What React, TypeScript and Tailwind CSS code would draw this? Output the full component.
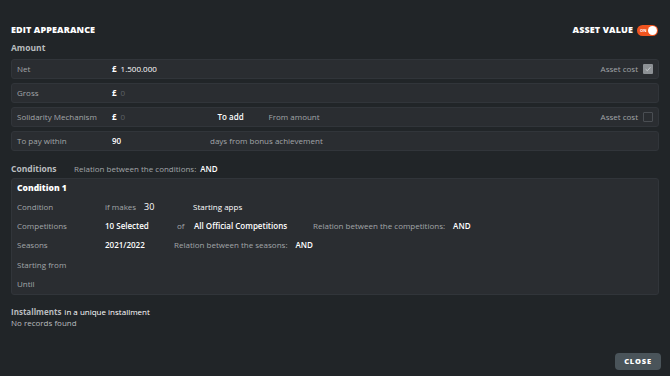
import React from 'react';

const font = { fontFamily: '"Open Sans", Lato, sans-serif' };

function Row({ children }: { children: React.ReactNode }) {
  return (
    <div className="flex items-center h-[20px] rounded-[3px] bg-[#2a2d31] border border-[#31353a] px-[5px] text-[8px] text-[#a2a6a9]">
      {children}
    </div>
  );
}

function Check({ checked }: { checked?: boolean }) {
  return (
    <span
      className={
        'ml-[5px] w-[10px] h-[10px] rounded-[1px] flex items-center justify-center ' +
        (checked ? 'bg-[#8d9195]' : 'border border-[#4a4e53]')
      }
    >
      {checked && (
        <svg width="8" height="8" viewBox="0 0 10 10">
          <path d="M2 5.2 L4.2 7.2 L8 2.8" fill="none" stroke="#c8cbcd" strokeWidth="1.2" />
        </svg>
      )}
    </span>
  );
}

function CondRow({ label, children }: { label: string; children?: React.ReactNode }) {
  return (
    <div className="flex items-center h-[19.3px] text-[8px] text-[#a2a6a9]">
      <span className="w-[88px] shrink-0">{label}</span>
      {children}
    </div>
  );
}

export default function App() {
  return (
    <div style={font} className="w-[670px] h-[376px] bg-[#212528] px-[11px] pt-[24px] relative overflow-hidden">
      <div className="flex items-center justify-between h-[12px]">
        <h1 className="text-[9px] font-extrabold text-white tracking-[0.1px]">EDIT APPEARANCE</h1>
        <div className="flex items-center gap-[4px] mr-[1px]">
          <span className="text-[9px] font-extrabold text-white tracking-[0.1px]">ASSET VALUE</span>
          <span className="w-[21px] h-[11px] rounded-full bg-[#f0541f] flex items-center justify-end pr-[1px] relative">
            <span className="absolute left-[3px] top-[3px] text-[4px] leading-[5px] text-white font-bold">ON</span>
            <span className="w-[9px] h-[9px] rounded-full bg-white" />
          </span>
        </div>
      </div>

      <div className="mt-[6px] text-[8.5px] font-bold text-[#b9bcbf] h-[12px] leading-[12px]">Amount</div>

      <div className="mt-[5px] flex flex-col gap-[4px]">
        <Row>
          <span className="w-[95px]">Net</span>
          <span className="text-white font-bold">£</span>
          <span className="ml-[4px] text-white">1.500.000</span>
          <span className="ml-auto">Asset cost</span>
          <Check checked />
        </Row>
        <Row>
          <span className="w-[95px]">Gross</span>
          <span className="text-white font-bold">£</span>
          <span className="ml-[4px] text-[#5d6165]">0</span>
        </Row>
        <Row>
          <span className="w-[95px]">Solidarity Mechanism</span>
          <span className="text-white font-bold">£</span>
          <span className="ml-[4px] text-[#5d6165] w-[97px]">0</span>
          <span className="text-white font-semibold w-[51px]">To add</span>
          <span>From amount</span>
          <span className="ml-auto">Asset cost</span>
          <Check />
        </Row>
        <Row>
          <span className="w-[95px]">To pay within</span>
          <span className="text-white font-semibold w-[98px]">90</span>
          <span>days from bonus achievement</span>
        </Row>
      </div>

      <div className="mt-[12px] flex items-baseline h-[12px]">
        <span className="text-[8.5px] font-bold text-[#b9bcbf] w-[63px]">Conditions</span>
        <span className="text-[8px] text-[#a2a6a9]">Relation between the conditions:</span>
        <span className="ml-[4px] text-[8px] text-white font-semibold">AND</span>
      </div>

      <div className="mt-[3px] rounded-[3px] bg-[#2a2d31] border border-[#31353a] px-[5px] pt-[2px] pb-[1px]">
        <div className="text-[8.5px] font-extrabold text-white h-[13px] leading-[13px]">Condition 1</div>
        <div className="mt-[3px]">
          <CondRow label="Condition">
            <span className="w-[39px]">if makes</span>
            <span className="text-white text-[9px] w-[49px]">30</span>
            <span className="text-white">Starting apps</span>
          </CondRow>
          <CondRow label="Competitions">
            <span className="text-white font-semibold w-[72px]">10 Selected</span>
            <span className="w-[17px]">of</span>
            <span className="text-white font-semibold w-[119px]">All Official Competitions</span>
            <span>Relation between the competitions:</span>
            <span className="ml-[8px] text-white font-semibold">AND</span>
          </CondRow>
          <CondRow label="Seasons">
            <span className="text-white font-semibold w-[69px]">2021/2022</span>
            <span>Relation between the seasons:</span>
            <span className="ml-[8px] text-white font-semibold">AND</span>
          </CondRow>
          <CondRow label="Starting from" />
          <CondRow label="Until" />
        </div>
      </div>

      <div className="mt-[11px] flex items-baseline h-[12px]">
        <span className="text-[8px] font-bold text-[#b9bcbf]">Installments</span>
        <span className="ml-[3px] text-[8px] text-white">in a unique installment</span>
      </div>
      <div className="text-[8px] text-[#b9bcbf] leading-[10px]">No records found</div>

      <button className="absolute left-[615px] top-[353px] w-[46px] h-[17px] rounded-[4px] bg-[#4a545a] text-[7.5px] font-extrabold text-white tracking-[0.8px]">
        CLOSE
      </button>
    </div>
  );
}
